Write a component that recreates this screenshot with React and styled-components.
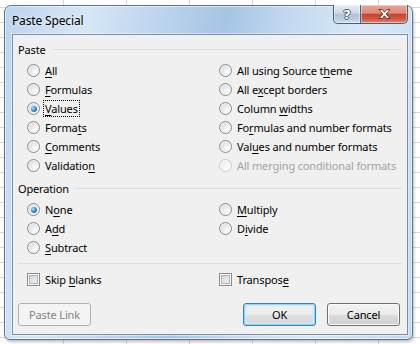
import React from "react";
import styled, { createGlobalStyle, css } from "styled-components";

const GlobalStyle = createGlobalStyle`
  html, body {
    margin: 0;
    padding: 0;
  }
  body {
    font-family: "Noto Sans", "Liberation Sans", Arial, sans-serif;
    font-size: 11px;
    letter-spacing: -0.15px;
    color: #000;
  }
`;

const Sheet = styled.div`
  width: 420px;
  height: 344px;
  box-sizing: border-box;
  padding: 5px 7px 4px 4px;
  background-color: #fff;
  background-image:
    repeating-linear-gradient(90deg, transparent 0 62px, #d8d8d8 62px 63px),
    repeating-linear-gradient(180deg, transparent 0 7px, #d8d8d8 7px 8px, transparent 8px 15px);
  background-position: 1px 0, 0 0;
`;

const Window = styled.div`
  width: 409px;
  height: 335px;
  box-sizing: border-box;
  display: flex;
  flex-direction: column;
  padding: 0 4px 4px 7px;
  border: 1px solid #5f7388;
  border-radius: 7px 7px 6px 6px;
  background: linear-gradient(
    100deg,
    #bcd4ee 0%,
    #d6e6f6 18%,
    #bfd6ef 32%,
    #a6c4e4 48%,
    #c4daf0 62%,
    #d9e8f7 78%,
    #c0d7ef 100%
  );
  box-shadow: inset 0 0 0 1px rgba(255, 255, 255, 0.55), 1px 2px 3px rgba(0, 0, 0, 0.25);
`;

const TitleBar = styled.div`
  height: 28px;
  display: flex;
  align-items: flex-start;
`;

const Title = styled.div`
  margin-top: 7px;
  font-size: 12px;
  line-height: 15px;
  color: #000;
  text-shadow: 0 0 6px rgba(255, 255, 255, 0.9);
`;

const CaptionButtons = styled.div`
  margin-left: auto;
  margin-top: -1px;
  display: flex;
`;

const CaptionButton = styled.div`
  height: 19px;
  box-sizing: border-box;
  display: flex;
  align-items: center;
  justify-content: center;
  border: 1px solid #4d5e72;
  border-top: none;
  box-shadow: inset 0 0 0 1px rgba(255, 255, 255, 0.45);
  ${(p) =>
    p.close
      ? css`
          width: 47px;
          border-left: none;
          border-radius: 0 0 5px 0;
          background: linear-gradient(180deg, #e8a597 0%, #dc8a7b 45%, #c8432f 52%, #d05a45 80%, #e08a74 100%);
        `
      : css`
          width: 28px;
          border-radius: 0 0 0 5px;
          background: linear-gradient(180deg, #e4edf6 0%, #cbd9e7 45%, #b3c4d7 52%, #bccde0 80%, #d2e1ef 100%);
        `}
`;

const HelpGlyph = styled.span`
  font-family: "DejaVu Sans", sans-serif;
  font-weight: bold;
  font-size: 13px;
  line-height: 13px;
  color: #fff;
  text-shadow: -1px 0 #4a5868, 1px 0 #4a5868, 0 -1px #4a5868, 0 1px #4a5868;
`;

const Client = styled.div`
  flex: 1;
  display: flex;
  flex-direction: column;
  padding: 6px 5px 0 5px;
  background: #f0f0f0;
  border: 1px solid #7b90a6;
  box-shadow: 0 0 0 1px rgba(255, 255, 255, 0.45);
`;

const GroupHeader = styled.div`
  height: 16px;
  display: flex;
  align-items: center;
  gap: 6px;
  margin-top: ${(p) => p.top || 0}px;
`;

const Rule = styled.div`
  flex: 1;
  height: 1px;
  background: #d5dfe5;
`;

const OptionGrid = styled.div`
  display: grid;
  grid-auto-flow: column;
  grid-template-columns: 192px 1fr;
  grid-template-rows: repeat(${(p) => p.rows}, 19px);
  padding-left: 9px;
  margin-top: 4px;
`;

const Option = styled.div`
  display: flex;
  align-items: center;
  gap: 5px;
  color: ${(p) => (p.disabled ? "#a3a3a3" : "#000")};
`;

const Radio = styled.span`
  width: 13px;
  height: 13px;
  box-sizing: border-box;
  border-radius: 50%;
  border: 1px solid ${(p) => (p.disabled ? "#c9c9c9" : "#8a8a8a")};
  display: flex;
  align-items: center;
  justify-content: center;
  background: ${(p) =>
    p.disabled
      ? "radial-gradient(circle at 65% 65%, #fbfbfb 0%, #f0f0f0 60%, #e6e6e6 100%)"
      : "radial-gradient(circle at 65% 65%, #ffffff 0%, #e8e8e8 45%, #cfcfcf 100%)"};
  box-shadow: inset 0 0 0 1px rgba(255, 255, 255, 0.7);

  &::after {
    content: "";
    display: ${(p) => (p.checked ? "block" : "none")};
    width: 6px;
    height: 6px;
    border-radius: 50%;
    background: radial-gradient(circle at 35% 35%, #b9e3fb 0%, #3a93d6 45%, #0f4f8a 100%);
  }
`;

const Check = styled.span`
  width: 13px;
  height: 13px;
  box-sizing: border-box;
  border: 1px solid #8a8a8a;
  background: linear-gradient(135deg, #c9cdd2 0%, #e6e6e6 55%, #f7f7f7 100%);
  box-shadow: inset 0 0 0 1px #fcfcfc, inset 0 0 0 2px #aeb3b9;
`;

const Text = styled.span`
  line-height: 15px;
  padding: 0 1px;
  margin-left: -1px;
  ${(p) =>
    p.focused &&
    css`
      outline: 1px dotted #000;
      outline-offset: 0;
    `}
`;

const Key = styled.u`
  text-decoration: underline;
  text-underline-offset: 2px;
`;

const Separator = styled.div`
  height: 1px;
  background: #d5dfe5;
  margin-top: 6px;
`;

const CheckGrid = styled(OptionGrid)`
  margin-top: 6px;
`;

const ButtonRow = styled.div`
  display: flex;
  gap: 11px;
  margin-top: 14px;
  padding-right: 2px;
`;

const Spacer = styled.div`
  flex: 1;
`;

const Button = styled.div`
  width: 73px;
  height: 23px;
  box-sizing: border-box;
  display: flex;
  align-items: center;
  justify-content: center;
  border-radius: 3px;
  border: 1px solid #707070;
  color: #000;
  background: linear-gradient(180deg, #f2f2f2 0%, #ebebeb 50%, #dddddd 51%, #cfcfcf 100%);
  box-shadow: inset 0 0 0 1px #fcfcfc;
  ${(p) =>
    p.primary &&
    css`
      border-color: #3c7fb1;
      box-shadow: inset 0 0 0 1px #8fd6f7, inset 0 0 2px 2px #c8ecfc;
      background: linear-gradient(180deg, #f2f2f2 0%, #ececec 50%, #e0e0e0 51%, #d6d6d6 100%);
    `}
  ${(p) =>
    p.disabled &&
    css`
      border-color: #adb2b5;
      color: #838383;
      background: #f4f4f4;
      box-shadow: none;
    `}
`;

function Label({ text, k, focused }) {
  if (k === undefined) return <Text focused={focused}>{text}</Text>;
  return (
    <Text focused={focused}>
      {text.slice(0, k)}
      <Key>{text[k]}</Key>
      {text.slice(k + 1)}
    </Text>
  );
}

const pasteOptions = [
  { text: "All", k: 0 },
  { text: "Formulas", k: 0 },
  { text: "Values", k: 0, checked: true, focused: true },
  { text: "Formats", k: 5 },
  { text: "Comments", k: 0 },
  { text: "Validation", k: 9 },
  { text: "All using Source theme", k: 18 },
  { text: "All except borders", k: 5 },
  { text: "Column widths", k: 7 },
  { text: "Formulas and number formats", k: 2 },
  { text: "Values and number formats", k: 3 },
  { text: "All merging conditional formats", disabled: true },
];

const operationOptions = [
  { text: "None", k: 1, checked: true },
  { text: "Add", k: 1 },
  { text: "Subtract", k: 0 },
  { text: "Multiply", k: 0 },
  { text: "Divide", k: 1 },
];

function RadioOption({ opt }) {
  return (
    <Option disabled={opt.disabled}>
      <Radio checked={opt.checked} disabled={opt.disabled} />
      <Label text={opt.text} k={opt.k} focused={opt.focused} />
    </Option>
  );
}

function CloseGlyph() {
  return (
    <svg width="15" height="12" viewBox="0 0 15 12">
      <path
        d="M2 1.5 L5.2 1.5 L7.5 4.2 L9.8 1.5 L13 1.5 L9.2 6 L13 10.5 L9.8 10.5 L7.5 7.8 L5.2 10.5 L2 10.5 L5.8 6 Z"
        fill="#fff"
        stroke="#5a3b36"
        strokeWidth="1"
        strokeLinejoin="round"
      />
    </svg>
  );
}

export default function App() {
  return (
    <>
      <GlobalStyle />
      <Sheet>
        <Window>
          <TitleBar>
            <Title>Paste Special</Title>
            <CaptionButtons>
              <CaptionButton>
                <HelpGlyph>?</HelpGlyph>
              </CaptionButton>
              <CaptionButton close>
                <CloseGlyph />
              </CaptionButton>
            </CaptionButtons>
          </TitleBar>
          <Client>
            <GroupHeader>
              <span>Paste</span>
              <Rule />
            </GroupHeader>
            <OptionGrid rows={6}>
              {pasteOptions.map((opt) => (
                <RadioOption key={opt.text} opt={opt} />
              ))}
            </OptionGrid>

            <GroupHeader top={5}>
              <span>Operation</span>
              <Rule />
            </GroupHeader>
            <OptionGrid rows={3}>
              {operationOptions.map((opt) => (
                <RadioOption key={opt.text} opt={opt} />
              ))}
            </OptionGrid>

            <Separator />
            <CheckGrid rows={1}>
              <Option>
                <Check />
                <Label text="Skip blanks" k={5} />
              </Option>
              <Option>
                <Check />
                <Label text="Transpose" k={8} />
              </Option>
            </CheckGrid>

            <ButtonRow>
              <Button disabled>Paste Link</Button>
              <Spacer />
              <Button primary>OK</Button>
              <Button>Cancel</Button>
            </ButtonRow>
          </Client>
        </Window>
      </Sheet>
    </>
  );
}
